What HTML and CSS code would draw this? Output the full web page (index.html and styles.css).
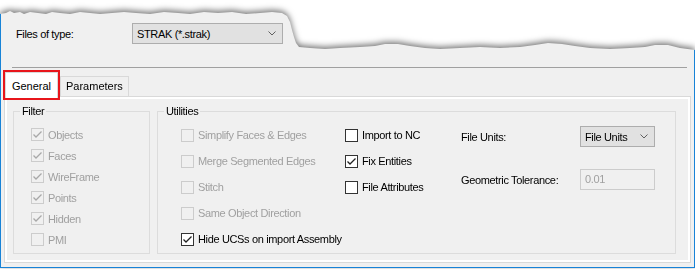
FILE: index.html
```html
<html>
    <head>
        <title>Import options</title>
        <link rel="stylesheet" href="styles.css">
    </head>
    <body>
        <div class="sheet">
            <div class="window">
                <div class="filetype">
                    <span class="filetype-label">Files of type:</span>
                    <div class="combo combo-wide">
                        <span>STRAK (*.strak)</span>
                        <svg class="chev" width="8" height="5" viewBox="0 0 8 5"><polyline points="0.5,0.5 4,4 7.5,0.5"/></svg>
                    </div>
                </div>

                <div class="sep"></div>

                <div class="tabstrip">
                    <div class="tab active">General</div>
                    <div class="tab">Parameters</div>
                </div>

                <div class="panel">
                    <div class="page">
                        <fieldset class="group group-filter">
                            <legend>Filter</legend>
                            <div class="filter-list">
                                <div class="check disabled"><span class="box"><svg viewBox="0 0 11 11"><polyline points="1.5,5.5 4,8 9.5,2.5"/></svg></span>Objects</div>
                                <div class="check disabled"><span class="box"><svg viewBox="0 0 11 11"><polyline points="1.5,5.5 4,8 9.5,2.5"/></svg></span>Faces</div>
                                <div class="check disabled"><span class="box"><svg viewBox="0 0 11 11"><polyline points="1.5,5.5 4,8 9.5,2.5"/></svg></span>WireFrame</div>
                                <div class="check disabled"><span class="box"><svg viewBox="0 0 11 11"><polyline points="1.5,5.5 4,8 9.5,2.5"/></svg></span>Points</div>
                                <div class="check disabled"><span class="box"><svg viewBox="0 0 11 11"><polyline points="1.5,5.5 4,8 9.5,2.5"/></svg></span>Hidden</div>
                                <div class="check disabled"><span class="box"></span>PMI</div>
                            </div>
                        </fieldset>

                        <fieldset class="group group-utilities">
                            <legend>Utilities</legend>
                            <div class="util-cols">
                                <div class="util-list col-a">
                                    <div class="check disabled"><span class="box"></span>Simplify Faces &amp; Edges</div>
                                    <div class="check disabled"><span class="box"></span>Merge Segmented Edges</div>
                                    <div class="check disabled"><span class="box"></span>Stitch</div>
                                    <div class="check disabled"><span class="box"></span>Same Object Direction</div>
                                    <div class="check"><span class="box"><svg viewBox="0 0 11 11"><polyline points="1.5,5.5 4,8 9.5,2.5"/></svg></span>Hide UCSs on import Assembly</div>
                                </div>
                                <div class="util-list col-b">
                                    <div class="check"><span class="box"></span>Import to NC</div>
                                    <div class="check"><span class="box"><svg viewBox="0 0 11 11"><polyline points="1.5,5.5 4,8 9.5,2.5"/></svg></span>Fix Entities</div>
                                    <div class="check"><span class="box"></span>File Attributes</div>
                                </div>
                                <div class="util-form">
                                    <div class="form-row">
                                        <span class="form-label">File Units:</span>
                                        <div class="combo combo-small">
                                            <span>File Units</span>
                                            <svg class="chev" width="8" height="5" viewBox="0 0 8 5"><polyline points="0.5,0.5 4,4 7.5,0.5"/></svg>
                                        </div>
                                    </div>
                                    <div class="form-row">
                                        <span class="form-label">Geometric Tolerance:</span>
                                        <div class="textbox">0.01</div>
                                    </div>
                                </div>
                            </div>
                        </fieldset>
                    </div>
                </div>
            </div>
        </div>
    </body>
</html>
```

FILE: styles.css
```css
body {
    margin: 0;
    background-color: #FFFFFF;
    color: #000000;
    font-family: "Liberation Sans", Arial, sans-serif;
    font-size: 11px;
    letter-spacing: -0.35px;
    overflow: hidden;
}

/* shadow of the torn edge */
.sheet {
    width: 695px;
    height: 269px;
    filter: drop-shadow(0 -2px 3px rgba(0, 0, 0, 0.55));
}

.window {
    box-sizing: border-box;
    width: 695px;
    height: 268px;
    background-color: #F0F0F0;
    border-left: 1px solid #1883D7;
    border-right: 1px solid #1883D7;
    border-bottom: 1px solid #1883D7;
    clip-path: polygon(0 14px, 6px 13px, 10px 11px, 14px 13px, 20px 12px, 24px 14px, 30px 12px, 38px 13px, 46px 14px, 52px 12px, 60px 13px, 70px 14px, 80px 12px, 90px 13px, 100px 14px, 112px 13px, 124px 12px, 136px 13px, 150px 14px, 164px 12px, 178px 13px, 190px 14px, 204px 12px, 218px 13px, 232px 12px, 246px 14px, 260px 13px, 272px 12px, 282px 13px, 287px 16px, 290px 22px, 292px 30px, 294px 37px, 296px 43px, 299px 47px, 310px 48px, 325px 49px, 340px 48px, 360px 47px, 375px 46px, 385px 44px, 398px 44px, 410px 46px, 425px 48px, 440px 49px, 460px 48px, 480px 47px, 500px 48px, 520px 47px, 535px 45px, 548px 43px, 562px 44px, 575px 46px, 590px 48px, 610px 49px, 630px 48px, 645px 47px, 655px 45px, 668px 45px, 680px 48px, 695px 50px, 695px 269px, 0 269px);
}

.filetype {
    display: flex;
    align-items: center;
    padding: 23px 0 0 15px;
}

.filetype-label {
    width: 116px;
}

.combo {
    box-sizing: border-box;
    display: flex;
    align-items: center;
    justify-content: space-between;
    height: 21px;
    padding: 0 6px 0 4px;
    background-color: #E1E1E1;
    border: 1px solid #ADADAD;
}

.combo-wide {
    width: 151px;
}

.combo-small {
    width: 75px;
}

.chev polyline {
    fill: none;
    stroke: #606060;
    stroke-width: 1;
}

.sep {
    height: 1px;
    margin: 23px 7px 0 11px;
    background-color: #A0A0A0;
}

.tabstrip {
    display: flex;
    align-items: flex-end;
    height: 28px;
    padding-left: 4px;
}

.tab {
    box-sizing: border-box;
    height: 20px;
    padding: 0 5px;
    line-height: 18px;
    letter-spacing: 0;
    background-color: #F0F0F0;
    border: 1px solid #D9D9D9;
    border-bottom: none;
}

.tab.active {
    position: relative;
    z-index: 1;
    width: 53px;
    height: 26px;
    margin: 0 2px -2px 0;
    padding: 4px 0 0;
    text-align: center;
    background-color: #FFFFFF;
    outline: 2px solid #E8151B;
}

.panel {
    box-sizing: border-box;
    height: 167px;
    margin: 0 3px;
    padding: 2px;
    background-color: #FFFFFF;
    border: 1px solid #D9D9D9;
}

.page {
    box-sizing: border-box;
    display: flex;
    gap: 7px;
    height: 161px;
    padding: 6px 12px 6px 6px;
    background-color: #F0F0F0;
}

.group {
    margin: 0;
    padding: 0;
    min-width: 0;
    border: 1px solid #DCDCDC;
}

.group legend {
    margin-left: 6px;
    padding: 0 2px;
    line-height: 13px;
}

.group-filter {
    width: 137px;
    box-sizing: border-box;
}

.group-utilities {
    flex: 1;
}

.filter-list {
    padding: 6px 0 0 17px;
}

.check {
    display: flex;
    align-items: center;
    gap: 4px;
    height: 21px;
    white-space: nowrap;
}

.check .box {
    box-sizing: border-box;
    display: flex;
    width: 13px;
    height: 13px;
    background-color: #FFFFFF;
    border: 1px solid #333333;
}

.check .box svg {
    width: 11px;
    height: 11px;
}

.check .box polyline {
    fill: none;
    stroke: #222222;
    stroke-width: 1.3;
}

.check.disabled {
    color: #A0A0A0;
}

.check.disabled .box {
    background-color: #F0F0F0;
    border-color: #CCCCCC;
}

.check.disabled .box polyline {
    stroke: #A8A8A8;
}

.util-cols {
    display: flex;
    padding: 4px 0 0 23px;
}

.util-list .check {
    height: 26px;
}

.col-a {
    width: 164px;
}

.col-b {
    width: 116px;
}

.util-form {
    display: flex;
    flex-direction: column;
    gap: 22px;
    margin-top: 4px;
}

.form-row {
    display: flex;
    align-items: center;
    height: 21px;
}

.form-label {
    width: 119px;
}

.textbox {
    box-sizing: border-box;
    width: 75px;
    height: 21px;
    padding-left: 4px;
    line-height: 19px;
    color: #A0A0A0;
    background-color: #F0F0F0;
    border: 1px solid #CCCCCC;
}
```
